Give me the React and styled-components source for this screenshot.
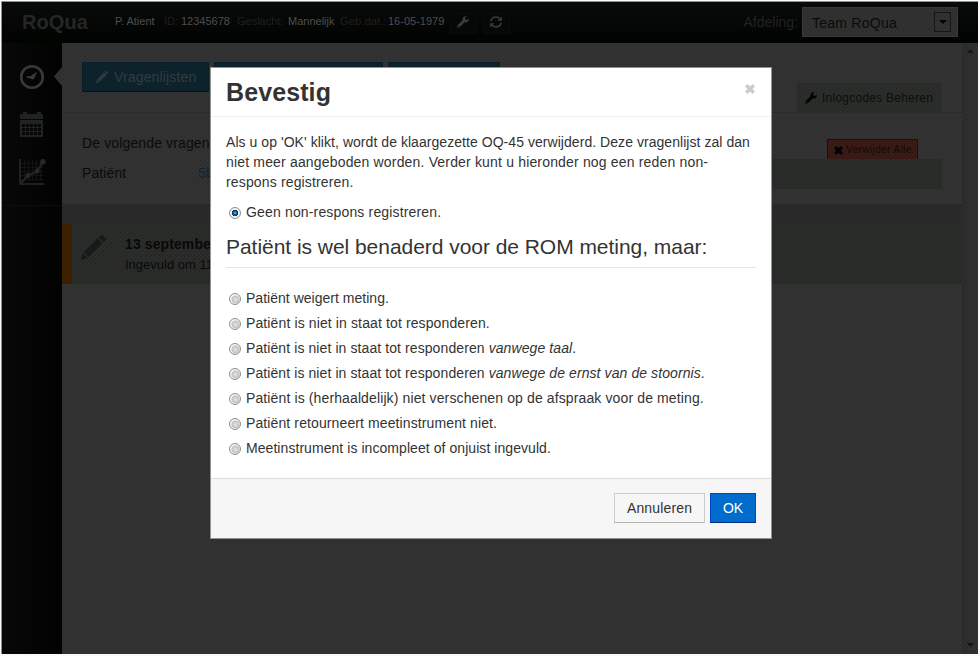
import React from "react";
import styled, { createGlobalStyle } from "styled-components";

const Global = createGlobalStyle`
  * { box-sizing: border-box; }
  html, body { margin: 0; padding: 0; background: #fff; }
  body {
    font: 14px/20px "Liberation Sans", Arial, sans-serif;
    color: #0b0b0b;
    overflow: hidden;
  }
  p, h1, h2 { margin: 0; }
  svg { display: block; flex: none; }
`;

const Screen = styled.div`
  width: 980px;
  height: 656px;
  padding: 1px 2px 2px 1px;
  background: #fbfafb;
`;

const Frame = styled.div`
  position: relative;
  height: 653px;
  display: flex;
  flex-direction: column;
  border-top: 1px solid #8f9090;
  border-left: 1px solid #8f9090;
  background: #333;
  overflow: hidden;
`;

const TopBar = styled.header`
  display: flex;
  align-items: center;
  height: 41px;
  flex: none;
  padding: 0 20px 0 20px;
  background: linear-gradient(#090b0a, #010301);
  white-space: nowrap;
`;

const Brand = styled.div`
  width: 93px;
  padding-bottom: 2px;
  font-size: 20px;
  font-weight: bold;
  letter-spacing: 0.1px;
  color: #252828;
`;

const PatientInfo = styled.div`
  display: flex;
  width: 335px;
  font-size: 11px;
  padding-bottom: 3px;
`;

const Field = styled.span`
  width: ${(p) => p.$w}px;
  letter-spacing: ${(p) => p.$ls || 0}px;
  color: ${(p) => (p.$label ? "#1f2120" : "#505251")};
`;

const IconButton = styled.button`
  display: flex;
  align-items: center;
  justify-content: center;
  width: 27px;
  height: 21px;
  margin: 1px 6px 0 0;
  padding: 0 2px 2px 0;
  color: #3d3f3e;
  background: #060807;
  border: 1px solid #0a0c0b;
`;

const Department = styled.div`
  display: flex;
  align-items: center;
  margin-left: auto;
  margin-bottom: 1px;
  color: #222424;
`;

const SelectBox = styled.div`
  display: flex;
  align-items: center;
  justify-content: space-between;
  width: 156px;
  height: 30px;
  margin-left: 4px;
  padding: 2px 6px 0 9px;
  color: #0b0b0b;
  letter-spacing: 0.25px;
  background: #323232;
  border: 1px solid #3b3b3b;
`;

const SelectArrow = styled.span`
  display: flex;
  align-items: center;
  justify-content: center;
  width: 17px;
  height: 20px;
  margin-top: -2px;
  border: 1px solid #171717;
`;

const Main = styled.div`
  display: flex;
  flex: 1;
`;

const Sidebar = styled.nav`
  width: 60px;
  background: linear-gradient(90deg, #080808, #010301 95%);
`;

const SideMenu = styled.div`
  display: flex;
  flex-direction: column;
  height: 163px;
  border-bottom: 1px solid #0d0f0e;
`;

const SideItem = styled.div`
  display: flex;
  align-items: center;
  justify-content: space-between;
  height: ${(p) => p.$h}px;
  padding-left: ${(p) => p.$left}px;
`;

const Content = styled.main`
  width: 900px;
`;

const Tabs = styled.section`
  display: flex;
  gap: 5px;
  height: 70px;
  padding: 19px 20px 0;
  border-bottom: 1px solid #2d2d2d;
`;

const Tab = styled.div`
  display: flex;
  align-items: center;
  width: ${(p) => p.$w}px;
  height: 30px;
  padding-left: 13px;
  gap: 6px;
  letter-spacing: 0.15px;
  color: #343e41;
  background: #0d242d;
  border: 1px solid #0a1f28;
  border-bottom-color: #05141c;
`;

const CodesTab = styled.div`
  display: flex;
  align-items: center;
  gap: 5px;
  width: 144px;
  height: 29px;
  margin: 21px 1px 0 auto;
  padding-left: 7px;
  font-size: 12px;
  letter-spacing: 0.24px;
  color: #0d0f0d;
  background: #2b2e2b;
  border: 1px solid #292c29;
  border-bottom: 0;
  white-space: nowrap;
  svg { color: #010101; }
`;

const Assignment = styled.section`
  height: 91px;
  padding: 20px 20px 0;
`;

const Intro = styled.div`
  display: flex;
  justify-content: space-between;
  height: 26px;
  white-space: nowrap;
  letter-spacing: 0.13px;
`;

const RemoveAll = styled.button`
  display: flex;
  align-items: center;
  gap: 3px;
  width: 91px;
  height: 20px;
  margin: 6px 24px 0 0;
  padding: 0 0 0 6px;
  font: 10px "Liberation Sans", Arial, sans-serif;
  letter-spacing: 0.42px;
  color: #120a08;
  background: #3b1b15;
  border: 1px solid #240d09;
  border-bottom: 0;
  white-space: nowrap;
  svg { color: #020101; margin-top: 1px; }
`;

const PatientRow = styled.div`
  display: flex;
  align-items: center;
  height: 30px;
  padding-bottom: 2px;
  letter-spacing: 0.1px;
  background: linear-gradient(90deg, transparent 400px, #2b2d2b 400px);
`;

const RowName = styled.span`
  width: 116px;
`;

const CodeLink = styled.a`
  color: #0b2836;
`;

const Band = styled.div`
  height: 20px;
  background: #2b2b2b;
`;

const Entry = styled.article`
  display: flex;
  height: 60px;
  padding: 10px 0 0 9px;
  border-left: 10px solid #3e2200;
  background: #2b2d2b;
  > svg { color: #191b1a; margin-top: 1px; }
`;

const EntryText = styled.div`
  margin-left: 19px;
  color: #090909;
  white-space: nowrap;
`;

const EntryTitle = styled.div`
  font-weight: bold;
  letter-spacing: 0.1px;
`;

const EntryMeta = styled.div`
  font-size: 13px;
  line-height: 21px;
`;

const Scrollbar = styled.div`
  display: flex;
  flex-direction: column;
  justify-content: space-between;
  align-items: center;
  width: 16px;
  padding: 6px 0 7px;
  background: linear-gradient(90deg, #2b2e2b, #333133);
`;

const Backdrop = styled.div`
  position: absolute;
  inset: 0;
  background-image:
    radial-gradient(circle at 1px 1px, rgba(0, 0, 0, 0.09) 0.7px, transparent 1px),
    radial-gradient(circle at 3px 3px, rgba(0, 0, 0, 0.07) 0.7px, transparent 1px);
  background-size: 4px 4px;
`;

const Dialog = styled.div`
  position: absolute;
  left: 208px;
  top: 65px;
  width: 562px;
  height: 472px;
  display: flex;
  flex-direction: column;
  color: #333;
  background: #fff;
  border: 1px solid #929292;
`;

const DialogHeader = styled.header`
  display: flex;
  justify-content: space-between;
  height: 49px;
  padding: 9px 15px 0 15px;
  border-bottom: 1px solid #eee;
`;

const DialogTitle = styled.h1`
  font-size: 25px;
  line-height: 30px;
  letter-spacing: 0.1px;
`;

const CloseButton = styled.button`
  display: flex;
  width: 11px;
  height: 11px;
  margin-top: 7px;
  padding: 0;
  color: #ccc;
  background: none;
  border: 0;
`;

const DialogBody = styled.div`
  flex: 1;
  padding: 15px;
`;

const Line = styled.span`
  display: block;
  white-space: nowrap;
  letter-spacing: ${(p) => p.$ls || 0}px;
`;

const Option = styled.label`
  display: flex;
  align-items: center;
  height: 20px;
  margin: ${(p) => (p.$first ? "10px 0 0" : "0 0 5px")};
  padding-left: 3px;
  white-space: pre;
  letter-spacing: ${(p) => p.$ls || 0}px;
`;

const Radio = styled.input.attrs({ type: "radio", name: "reason" })`
  appearance: none;
  width: 12px;
  height: 12px;
  margin: 2px 5px 0 0;
  border: 1px solid #8e8f8f;
  border-radius: 50%;
  background: radial-gradient(circle at 55% 55%, #e2e4e6 0, #c9cdd2 35%, #bcc0c5 44%, #f4f4f4 58%);
  &:checked {
    background: radial-gradient(circle at 50% 50%, #4ec4ee 0, #1476b2 19%, #0b2e50 41%, #edf1f5 50%);
  }
`;

const GroupTitle = styled.h2`
  height: 41px;
  margin: 5px 0 20px;
  font-size: 21px;
  line-height: 40px;
  font-weight: normal;
  letter-spacing: -0.04px;
  border-bottom: 1px solid #e5e5e5;
  white-space: nowrap;
`;

const DialogFooter = styled.footer`
  display: flex;
  justify-content: flex-end;
  gap: 5px;
  height: 60px;
  padding: 14px 15px 0;
  background: #f6f6f6;
  border-top: 1px solid #ddd;
`;

const Button = styled.button`
  width: ${(p) => p.$w}px;
  height: 30px;
  padding: 0;
  font: 14px "Liberation Sans", Arial, sans-serif;
  letter-spacing: ${(p) => p.$ls || 0}px;
  color: ${(p) => (p.$primary ? "#fff" : "#333")};
  background: ${(p) => (p.$primary ? "#006dcc" : "#f6f6f6")};
  border: 1px solid ${(p) => (p.$primary ? "#04c" : "#ccc")};
  border-bottom-color: ${(p) => (p.$primary ? "#002a80" : "#b3b3b3")};
`;

const Wrench = ({ size }) => (
  <svg width={size} height={size} viewBox="0 0 12 12" fill="currentColor">
    <path d="M11.8 2.4 9.9 4 8.2 3.5 8 2 9.7.3C7.7-.3 5.6 1 5.5 3.1c0 .5 0 .8.1 1.2L.6 9.2c-.7.7-.7 1.5-.1 2.1.6.6 1.5.6 2.2-.1l5-4.9c2.4.7 4.4-1.4 4.1-3.9ZM1.9 10.9a.7.7 0 1 1 0-1.4.7.7 0 0 1 0 1.4Z" />
  </svg>
);

const Refresh = () => (
  <svg width="12" height="12" viewBox="0 0 12 12" fill="none" stroke="currentColor" strokeWidth="1.7">
    <path d="M1 5.1C1.2 2.8 3.4 1 6 1c1.6 0 2.9.6 3.8 1.7M11 6.900C10.800 9.200 8.600 11 6 11c-1.600 0-2.900-.600-3.800-1.700" />
    <path d="M11.800 .6v4.100H7.700ZM.2 11.400V7.300h4.100Z" fill="currentColor" stroke="none" />
  </svg>
);

const Pencil = ({ size }) => (
  <svg width={size} height={size} viewBox="0 0 24 24" fill="currentColor">
    <path d="M17 2.200 19 .4q1-.8 2 .1l2.500 2.600q.9 1-.1 2l-1.700 1.700ZM16 3.200l4.700 4.700L7.400 21 2.600 16.300ZM1.900 17.400l4.900 4.800L0 24Z" />
  </svg>
);

const Cross = ({ size }) => (
  <svg width={size} height={size} viewBox="0 0 10 10" fill="currentColor">
    <path d="M2.400 0 5 2.500 7.600 0 10 2.400 7.500 5 10 7.600 7.600 10 5 7.500 2.400 10 0 7.600 2.500 5 0 2.400Z" />
  </svg>
);

const Gauge = () => (
  <svg width="26" height="26" viewBox="0 0 26 26" fill="none">
    <circle cx="13" cy="13" r="10.800" stroke="#3b3d3d" strokeWidth="2.600" />
    <path d="M18.200 7.600 15.400 14c-.6 1.600-2.800 1.900-3.800.6L7.700 13.800c-.8-.2-.7-1.300.1-1.400l4-.5Z" fill="#3b3d3d" />
  </svg>
);

const Pointer = () => (
  <svg width="8" height="19" viewBox="0 0 8 19">
    <path d="M8 0v19L0 9.500Z" fill="#333" />
  </svg>
);

const dayCells = [0, 1, 2, 3, 4].flatMap((x) => [0, 1, 2].map((y) => [x, y]));

const Calendar = () => (
  <svg width="24" height="26" viewBox="0 0 24 26">
    <path d="M3 0h4v2h10V0h4v2h2v5H0V2h3Z" fill="#222423" />
    <path d="M0 8h23v17H0Z" fill="#222423" />
    {dayCells.map(([x, y]) => (
      <rect key={`${x}-${y}`} x={2 + x * 4} y={12 + y * 4} width="3" height="3" fill="#050605" />
    ))}
  </svg>
);

const Chart = () => (
  <svg width="27" height="26" viewBox="0 0 27 26" fill="none">
    <path d="M5.500 1v21M9.500 1v21M13.500 1v21M17.500 1v21M21.500 1v21M2 4.500h22M2 8.500h22M2 12.500h22M2 16.500h22M2 20.500h22" stroke="#121413" />
    <path d="M1 0v25h24.500" stroke="#292b2a" strokeWidth="1.600" />
    <path d="m2 24 7-7.500 9-4L24 3" stroke="#292b2a" strokeWidth="1.800" />
    <g fill="#292b2a">
      <circle cx="9" cy="16.500" r="2.500" />
      <circle cx="18" cy="12" r="2.500" />
      <circle cx="24" cy="2.800" r="2.700" />
    </g>
  </svg>
);

const Triangle = ({ up, color = "#000", w = 7 }) => (
  <svg width={w} height="4" viewBox="0 0 8 4">
    <path d={up ? "M0 4 4 0l4 4Z" : "M0 0h8L4 4Z"} fill={color} />
  </svg>
);

const options = [
  { text: "Patiënt weigert meting.", ls: 0.02 },
  { text: "Patiënt is niet in staat tot responderen.", ls: 0.12 },
  { text: "Patiënt is niet in staat tot responderen ", em: "vanwege taal", end: ".", ls: 0.09 },
  { text: "Patiënt is niet in staat tot responderen ", em: "vanwege de ernst van de stoornis", end: ".", ls: 0.09 },
  { text: "Patiënt is (herhaaldelijk) niet verschenen op de afspraak voor de meting.", ls: 0.12 },
  { text: "Patiënt retourneert meetinstrument niet.", ls: 0.11 },
  { text: "Meetinstrument is incompleet of onjuist ingevuld.", ls: 0.06 },
];

export default function App() {
  return (
    <Screen>
      <Global />
      <Frame>
        <TopBar>
          <Brand>RoQua</Brand>
          <PatientInfo>
            <Field $w={49}>P. Atient</Field>
            <Field $w={17} $label>ID:</Field>
            <Field $w={56}>12345678</Field>
            <Field $w={51} $label>Geslacht:</Field>
            <Field $w={52}>Mannelijk</Field>
            <Field $w={48} $label $ls={0.2}>Geb.dat.:</Field>
            <Field $w={62}>16-05-1979</Field>
          </PatientInfo>
          <IconButton><Wrench size={12} /></IconButton>
          <IconButton><Refresh /></IconButton>
          <Department>
            Afdeling:
            <SelectBox>
              Team RoQua
              <SelectArrow><Triangle w={8} /></SelectArrow>
            </SelectBox>
          </Department>
        </TopBar>
        <Main>
          <Sidebar>
            <SideMenu>
              <SideItem $h={67} $left={17}><Gauge /><Pointer /></SideItem>
              <SideItem $h={29} $left={18}><Calendar /></SideItem>
              <SideItem $h={66} $left={17}><Chart /></SideItem>
            </SideMenu>
          </Sidebar>
          <Content>
            <Tabs>
              <Tab $w={127}><Pencil size={12} />Vragenlijsten</Tab>
              <Tab $w={169} />
              <Tab $w={112} />
              <CodesTab><Wrench size={12} />Inlogcodes Beheren</CodesTab>
            </Tabs>
            <Assignment>
              <Intro>
                De volgende vragen
                <RemoveAll><Cross size={9} />Verwijder Alle</RemoveAll>
              </Intro>
              <PatientRow>
                <RowName>Patiënt</RowName>
                <CodeLink>5b</CodeLink>
              </PatientRow>
            </Assignment>
            <Band />
            <Entry>
              <Pencil size={25} />
              <EntryText>
                <EntryTitle>13 september</EntryTitle>
                <EntryMeta>Ingevuld om 11</EntryMeta>
              </EntryText>
            </Entry>
          </Content>
          <Scrollbar>
            <Triangle up color="#151515" />
            <Triangle color="#111" />
          </Scrollbar>
        </Main>
        <Backdrop />
        <Dialog>
          <DialogHeader>
            <DialogTitle>Bevestig</DialogTitle>
            <CloseButton><Cross size={10} /></CloseButton>
          </DialogHeader>
          <DialogBody>
            <p>
              <Line $ls={0.05}>Als u op 'OK' klikt, wordt de klaargezette OQ-45 verwijderd. Deze vragenlijst zal dan</Line>
              <Line $ls={0.17}>niet meer aangeboden worden. Verder kunt u hieronder nog een reden non-</Line>
              <Line $ls={0.15}>respons registreren.</Line>
            </p>
            <Option $first $ls={0.16}><Radio defaultChecked />Geen non-respons registreren.</Option>
            <GroupTitle>Patiënt is wel benaderd voor de ROM meting, maar:</GroupTitle>
            {options.map((o) => (
              <Option key={o.text + (o.em || "")} $ls={o.ls}>
                <Radio />{o.text}{o.em && <em>{o.em}</em>}{o.end}
              </Option>
            ))}
          </DialogBody>
          <DialogFooter>
            <Button $w={91} $ls={0.15}>Annuleren</Button>
            <Button $w={46} $primary>OK</Button>
          </DialogFooter>
        </Dialog>
      </Frame>
    </Screen>
  );
}
